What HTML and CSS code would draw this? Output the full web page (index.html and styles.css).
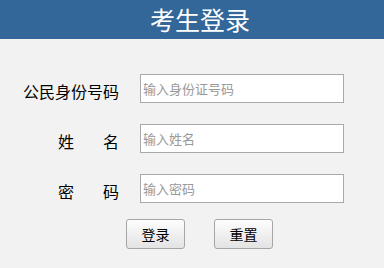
FILE: index.html
```html
<!DOCTYPE html>
<html lang="zh-CN">
<head>
<meta charset="utf-8">
<title>考生登录</title>
<link rel="stylesheet" href="styles.css">
</head>
<body>
<header class="top">考生登录</header>
<form class="login">
  <div class="row">
    <label class="lbl">公民身份号码</label>
    <input class="field" type="text" placeholder="输入身份证号码">
  </div>
  <div class="row">
    <label class="lbl"><span class="sp">姓</span>名</label>
    <input class="field" type="text" placeholder="输入姓名">
  </div>
  <div class="row">
    <label class="lbl"><span class="sp">密</span>码</label>
    <input class="field" type="password" placeholder="输入密码">
  </div>
  <div class="btns">
    <button class="btn" type="button">登录</button>
    <button class="btn" type="button">重置</button>
  </div>
</form>
</body>
</html>
```

FILE: styles.css
```css
html, body {
  margin: 0;
  padding: 0;
  background: #f2f2f2;
  font-family: "Noto Sans CJK SC", "Liberation Sans", sans-serif;
}
.top {
  height: 39px;
  background: #336699;
  color: #ffffff;
  font-size: 25px;
  line-height: 39px;
  text-align: center;
  padding-left: 16px;
}
.login {
  display: flex;
  flex-direction: column;
  gap: 21px;
  padding-top: 35px;
}
.row {
  display: flex;
  align-items: center;
  gap: 21px;
}
.lbl {
  width: 119px;
  text-align: right;
  font-size: 16px;
  color: #000;
  padding-top: 4px;
}
.sp {
  letter-spacing: 29px;
}
.field {
  box-sizing: border-box;
  width: 204px;
  height: 29px;
  margin: 0;
  border: 1px solid #a9a9a9;
  background: #fff;
  padding: 0 2px;
  font-family: "Noto Sans CJK SC", sans-serif;
  font-size: 13px;
  outline: none;
}
.field::placeholder {
  color: #999999;
}
.btns {
  display: flex;
  gap: 29px;
  padding-left: 126px;
  margin-top: -5px;
}
.btn {
  box-sizing: border-box;
  width: 59px;
  height: 30px;
  margin: 0;
  padding: 0;
  border: 1px solid #a6a6a6;
  border-radius: 3px;
  background: linear-gradient(#fdfdfd, #e3e3e3);
  font-family: "Noto Sans CJK SC", sans-serif;
  font-size: 14px;
  color: #000;
}
```
